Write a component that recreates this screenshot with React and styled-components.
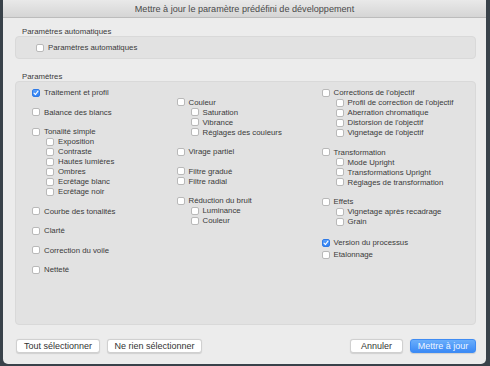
import React from 'react';
import styled, { createGlobalStyle } from 'styled-components';

const GlobalStyle = createGlobalStyle`
  html, body {
    margin: 0;
    padding: 0;
    background: #39424a;
  }
  body {
    font-family: "Liberation Sans", Arial, sans-serif;
  }
`;

const Window = styled.div`
  margin-left: 3px;
  width: 483px;
  height: 364px;
  background: #ececec;
  border-radius: 0 0 5px 5px;
  display: flex;
  flex-direction: column;
  overflow: hidden;
`;

const TitleBar = styled.div`
  height: 18px;
  box-sizing: border-box;
  display: flex;
  align-items: center;
  justify-content: center;
  background: linear-gradient(#e9e9e9, #d5d5d5);
  border-bottom: 1px solid #bcbcbc;
  font-size: 9.1px;
  color: #4a4a4a;
`;

const Content = styled.div`
  flex: 1;
  display: flex;
  flex-direction: column;
  padding: 9px 10px 0 12px;
`;

const SectionLabel = styled.div`
  height: 9px;
  line-height: 9px;
  font-size: 7.8px;
  color: #3a3a3a;
  padding-left: 7px;
  margin-top: ${p => p.$top || 0}px;
`;

const Box = styled.div`
  box-sizing: border-box;
  background: #e2e2e2;
  border: 1px solid #d9d9d9;
  border-radius: 4px;
  height: ${p => p.$height}px;
`;

const AutoBox = styled(Box)`
  display: flex;
  align-items: center;
  padding-left: 20px;
`;

const Grid = styled(Box)`
  display: grid;
  grid-template-columns: 144.5px 145px 1fr;
  align-items: start;
  padding: 5.5px 0 0 16px;
`;

const Column = styled.div`
  display: flex;
  flex-direction: column;
  padding-top: ${p => p.$offset || 0}px;
`;

const Row = styled.div`
  display: flex;
  align-items: center;
  gap: 4px;
  height: 10px;
  margin-top: ${p => p.$gap || 0}px;
  padding-left: ${p => (p.$sub ? 14 : 0)}px;
  font-size: 7.8px;
  color: #3a3a3a;
  white-space: nowrap;
`;

const Box8 = styled.span`
  box-sizing: border-box;
  width: 8px;
  height: 8px;
  flex: none;
  border-radius: 2px;
  border: 1px solid ${p => (p.$checked ? '#2f7ae6' : '#b9b9b9')};
  background: ${p => (p.$checked ? 'linear-gradient(#5aa0fa, #2f80f2)' : '#ffffff')};
  display: flex;
  align-items: center;
  justify-content: center;
`;

const Check = ({ checked }) => (
  <Box8 $checked={checked}>
    {checked && (
      <svg width="6" height="6" viewBox="0 0 6 6">
        <path d="M1 3.2 L2.4 4.6 L5 1.2" fill="none" stroke="#fff" strokeWidth="1.1" strokeLinecap="round" strokeLinejoin="round" />
      </svg>
    )}
  </Box8>
);

const Item = ({ label, sub, gap, checked }) => (
  <Row $sub={sub} $gap={gap}>
    <Check checked={checked} />
    <span>{label}</span>
  </Row>
);

const Footer = styled.div`
  display: flex;
  align-items: center;
  gap: 7px;
  margin-top: 14px;
  padding-left: 1px;
`;

const Spacer = styled.div`
  flex: 1;
`;

const Button = styled.div`
  box-sizing: border-box;
  height: 14px;
  width: ${p => p.$w}px;
  display: flex;
  align-items: center;
  justify-content: center;
  border-radius: 3px;
  font-size: 9px;
  background: ${p => (p.$primary ? 'linear-gradient(#6aaefb, #3b8af6)' : '#ffffff')};
  color: ${p => (p.$primary ? '#eef5ff' : '#333333')};
  border: 1px solid ${p => (p.$primary ? '#3f8cf3' : '#d0d0d0')};
  box-shadow: 0 0.5px 1px rgba(0, 0, 0, 0.12);
`;

const G = 9.5;

const col1 = [
  { label: 'Traitement et profil', checked: true },
  { label: 'Balance des blancs', gap: G },
  { label: 'Tonalité simple', gap: G },
  { label: 'Exposition', sub: true },
  { label: 'Contraste', sub: true },
  { label: 'Hautes lumières', sub: true },
  { label: 'Ombres', sub: true },
  { label: 'Ecrêtage blanc', sub: true },
  { label: 'Ecrêtage noir', sub: true },
  { label: 'Courbe des tonalités', gap: G },
  { label: 'Clarté', gap: G },
  { label: 'Correction du voile', gap: G },
  { label: 'Netteté', gap: G },
];

const col2 = [
  { label: 'Couleur' },
  { label: 'Saturation', sub: true },
  { label: 'Vibrance', sub: true },
  { label: 'Réglages des couleurs', sub: true },
  { label: 'Virage partiel', gap: G },
  { label: 'Filtre gradué', gap: G },
  { label: 'Filtre radial' },
  { label: 'Réduction du bruit', gap: G },
  { label: 'Luminance', sub: true },
  { label: 'Couleur', sub: true },
];

const col3 = [
  { label: "Corrections de l'objectif" },
  { label: "Profil de correction de l'objectif", sub: true },
  { label: 'Aberration chromatique', sub: true },
  { label: "Distorsion de l'objectif", sub: true },
  { label: "Vignetage de l'objectif", sub: true },
  { label: 'Transformation', gap: G },
  { label: 'Mode Upright', sub: true },
  { label: 'Transformations Upright', sub: true },
  { label: 'Réglages de transformation', sub: true },
  { label: 'Effets', gap: G },
  { label: 'Vignetage après recadrage', sub: true },
  { label: 'Grain', sub: true },
  { label: 'Version du processus', gap: 11, checked: true },
  { label: 'Etalonnage', gap: 2 },
];

const columns = [
  { offset: 0, items: col1 },
  { offset: G, items: col2 },
  { offset: 0, items: col3 },
];

export default function App() {
  return (
    <>
      <GlobalStyle />
      <Window>
        <TitleBar>Mettre à jour le paramètre prédéfini de développement</TitleBar>
        <Content>
          <SectionLabel>Paramètres automatiques</SectionLabel>
          <AutoBox $height={23}>
            <Item label="Paramètres automatiques" />
          </AutoBox>
          <SectionLabel $top={13}>Paramètres</SectionLabel>
          <Grid $height={244}>
            {columns.map((c, i) => (
              <Column key={i} $offset={c.offset}>
                {c.items.map((it, j) => (
                  <Item key={j} {...it} />
                ))}
              </Column>
            ))}
          </Grid>
          <Footer>
            <Button $w={84}>Tout sélectionner</Button>
            <Button $w={95}>Ne rien sélectionner</Button>
            <Spacer />
            <Button $w={53}>Annuler</Button>
            <Button $w={66} $primary>Mettre à jour</Button>
          </Footer>
        </Content>
      </Window>
    </>
  );
}
